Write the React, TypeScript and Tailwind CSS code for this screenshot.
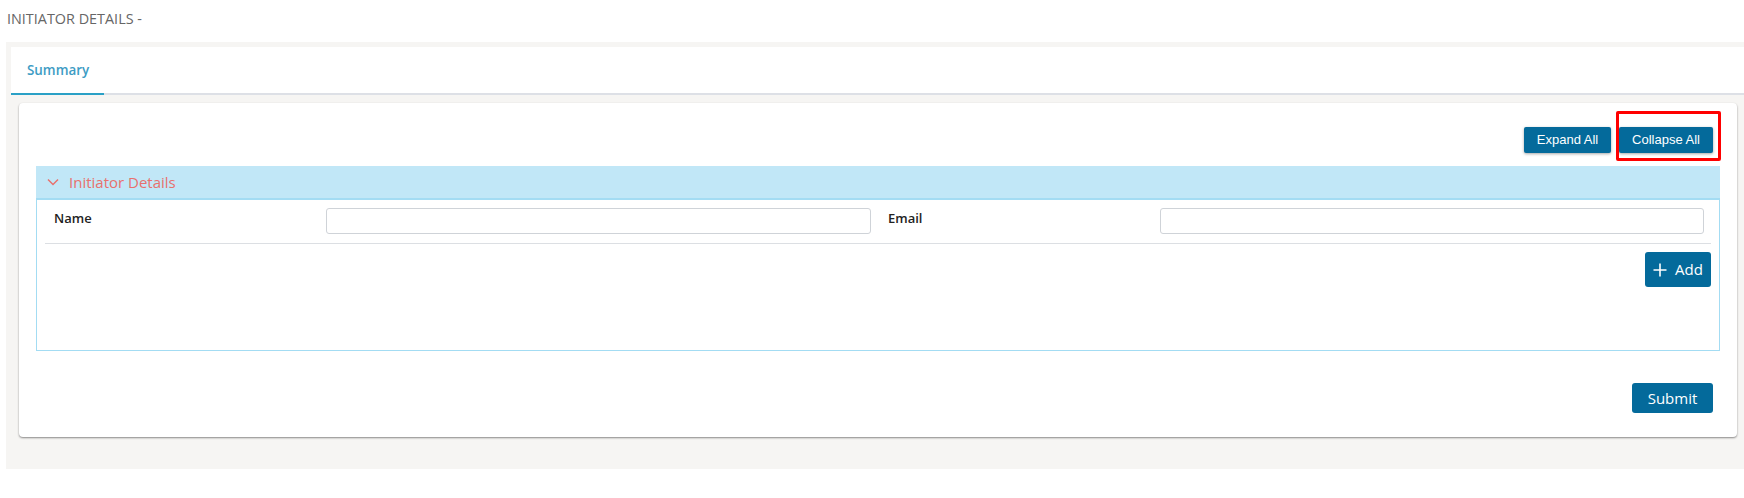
import React from "react";

export default function App() {
  const font = { fontFamily: '"Open Sans", "Noto Sans", sans-serif' };
  return (
    <div className="bg-white min-h-[498px] w-[1744px]" style={font}>
      <div className="h-[42px] pt-[9px] pl-[7px] text-[14.4px] leading-[20px] text-[#666666]">
        INITIATOR DETAILS -
      </div>
      <div className="ml-[6px] bg-[#f6f5f3] pt-[5px] pl-[5px] pb-[32px]">
        <div className="bg-white h-[48px] border-b-2 border-[#dde0e6] flex">
          <div className="w-[93px] h-[48px] -mb-[2px] border-b-2 border-[#2aa0c6] flex items-center pl-[16px] pt-[1px] text-[13.4px] font-semibold text-[#3d9cc4]">
            Summary
          </div>
        </div>
        <div className="mt-[8px] ml-[8px] mr-[7px] bg-white rounded-[4px] shadow-[0_1px_2px_rgba(0,0,0,0.45)] pt-[24px] pb-[24px] px-[17px]">
          <div className="flex justify-end gap-[8px] pr-[7px]" style={{ fontFamily: '"Liberation Sans", Arial, sans-serif' }}>
            <button className="h-[26px] w-[87px] bg-[#046a9b] text-white text-[13px] rounded-[2px] shadow-[0_1px_3px_rgba(0,0,0,0.35)]">
              Expand All
            </button>
            <div className="relative">
              <button className="h-[26px] w-[94px] bg-[#046a9b] text-white text-[13px] rounded-[2px] shadow-[0_1px_3px_rgba(0,0,0,0.35)]">
                Collapse All
              </button>
              <div className="absolute -left-[3px] -top-[16px] w-[105px] h-[50px] border-[3px] border-[#ff0000] rounded-[2px] pointer-events-none" />
            </div>
          </div>
          <div className="mt-[13px]">
            <div className="h-[32px] bg-[#c1e7f7] flex items-center pl-[11px] text-[#e8706d]">
              <svg width="12" height="8" viewBox="0 0 12 8" className="mr-[10px]">
                <path d="M1 1.5 L6 6.5 L11 1.5" fill="none" stroke="#e8706d" strokeWidth="1.5" />
              </svg>
              <span className="text-[15px] leading-[20px]">Initiator Details</span>
            </div>
            <div className="border border-t-2 border-[#a3dcf3] border-t-[#a3dcf3] h-[153px] px-[8px] pt-[8px]">
              <div className="flex border-b border-[#dcdfe3] pb-[9px]">
                <div className="w-[281px] pl-[9px] text-[13px] leading-[20px] font-semibold text-[#222]">Name</div>
                <input className="w-[545px] h-[26px] border border-[#cfd3d8] rounded-[3px] outline-none" />
                <div className="w-[8px]" />
                <div className="w-[281px] pl-[9px] text-[13px] leading-[20px] font-semibold text-[#222]">Email</div>
                <input className="w-[544px] h-[26px] border border-[#cfd3d8] rounded-[3px] outline-none" />
              </div>
              <div className="flex justify-end pt-[8px]">
                <button className="h-[35px] w-[66px] bg-[#046a9b] text-white rounded-[3px] flex items-center justify-center gap-[8px] text-[15px]">
                  <svg width="14" height="14" viewBox="0 0 14 14">
                    <path d="M7 0.5 V13.5 M0.5 7 H13.5" stroke="white" strokeWidth="1.6" />
                  </svg>
                  <span>Add</span>
                </button>
              </div>
            </div>
          </div>
          <div className="flex justify-end pr-[7px] mt-[32px]">
            <button className="h-[30px] w-[81px] bg-[#046a9b] text-white rounded-[3px] text-[15px]">
              Submit
            </button>
          </div>
        </div>
      </div>
    </div>
  );
}
